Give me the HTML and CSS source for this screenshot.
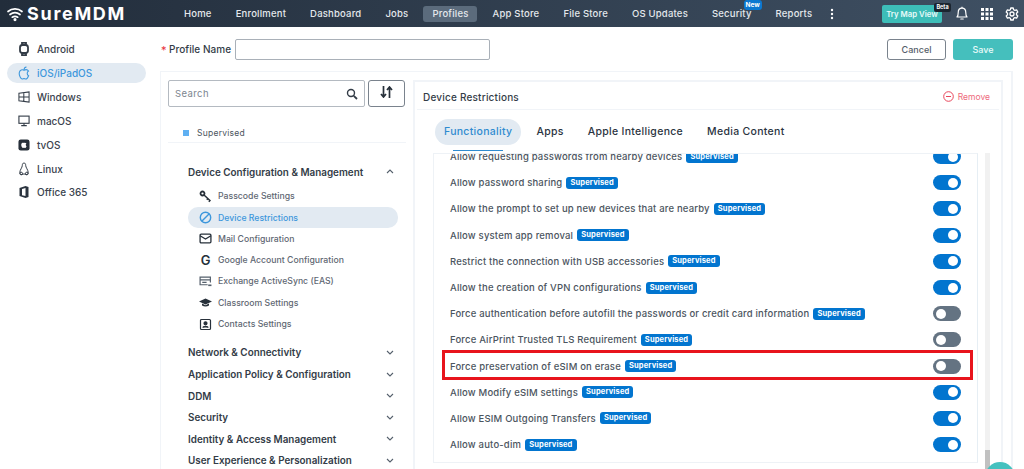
FILE: index.html
```html
<!DOCTYPE html>
<html lang="en">
<head>
    <meta charset="UTF-8">
    <title>SureMDM - Profiles</title>
    <link rel="stylesheet" href="styles.css">
</head>
<body>
    <header class="topbar">
        <div class="logo">
            <svg width="18" height="16" viewBox="0 0 18 16" fill="none" stroke="#fff" stroke-width="1.7" stroke-linecap="round">
                <path d="M2 5.5C6 2 12 2 16 5.5"/>
                <path d="M4 8.5C7 6.2 11 6.2 14 8.5"/>
                <path d="M6.3 11.2C8 10.2 10 10.2 11.7 11.2"/>
                <circle cx="9" cy="13.6" r="0.7" fill="#fff"/>
            </svg>
            <span>SureMDM</span>
        </div>
        <nav class="nav">
            <a>Home</a>
            <a>Enrollment</a>
            <a>Dashboard</a>
            <a>Jobs</a>
            <a class="active">Profiles</a>
            <a>App Store</a>
            <a>File Store</a>
            <a>OS Updates</a>
            <a class="has-badge">Security<span class="new-badge">New</span></a>
            <a>Reports</a>
            <svg class="more" width="4" height="12" viewBox="0 0 4 12" fill="#fff"><circle cx="2" cy="2" r="1.2"/><circle cx="2" cy="6" r="1.2"/><circle cx="2" cy="10" r="1.2"/></svg>
        </nav>
        <div class="top-actions">
            <button class="map-btn">Try Map View<span class="beta-badge">Beta</span></button>
            <svg width="14" height="15" viewBox="0 0 14 15" fill="none" stroke="#fff" stroke-width="1.2"><path d="M2 11c1-1 1.2-2 1.2-4.3C3.2 4 4.8 2.2 7 2.2S10.8 4 10.8 6.7C10.8 9 11 10 12 11z" stroke-linejoin="round"/><path d="M5.8 13h2.4" stroke-linecap="round"/><path d="M7 .8v1.2"/></svg>
            <svg width="12" height="12" viewBox="0 0 12 12" fill="#fff"><rect width="3" height="3"/><rect x="4.5" width="3" height="3"/><rect x="9" width="3" height="3"/><rect y="4.5" width="3" height="3"/><rect x="4.5" y="4.5" width="3" height="3"/><rect x="9" y="4.5" width="3" height="3"/><rect y="9" width="3" height="3"/><rect x="4.5" y="9" width="3" height="3"/><rect x="9" y="9" width="3" height="3"/></svg>
            <svg width="14" height="14" viewBox="0 0 14 14" fill="none" stroke="#fff" stroke-width="1.3"><path d="M5.8 1h2.400l.4 1.700 1.300.7 1.700-.5 1.200 2.100-1.300 1.200v1.600l1.300 1.200-1.200 2.100-1.700-.5-1.300.7L8.200 13H5.800l-.4-1.700-1.300-.7-1.700.5L1.200 9l1.300-1.200V6.200L1.200 5l1.200-2.100 1.700.5 1.300-.7z" stroke-linejoin="round"/><circle cx="7" cy="7" r="2"/></svg>
        </div>
    </header>

    <div class="page">
        <aside class="sidebar">
            <a class="os-item">
                <svg viewBox="0 0 12 14" fill="none" stroke="#333c47" stroke-width="1.8"><rect x="2" y="3" width="8" height="8" rx="2.5"/><path d="M4 3V.8h4V3M4 11v2.2h4V11"/></svg>
                Android
            </a>
            <a class="os-item active">
                <svg viewBox="0 0 12 14" fill="none" stroke="#3d97dc" stroke-width="1.1"><path d="M6 4.200C4.600 3.300 1.500 3.500 1.200 7c-.2 2.800 1.700 6 3 6 .7 0 1.100-.4 1.800-.4s1.100.4 1.800.4c1 0 2.100-1.500 2.800-3.300-1.700-.8-2-3.600-.1-4.700C9.600 3.600 7.400 3.500 6 4.200z"/><path d="M6 4C6 2.500 7 1.200 8.500 1"/></svg>
                iOS/iPadOS
            </a>
            <a class="os-item">
                <svg viewBox="0 0 13 13" fill="none" stroke="#333c47" stroke-width="1.1"><path d="M1 2.500l11-1.500v11l-11-1.500zM6.300 1.800v9.400M1 6.500h11"/></svg>
                Windows
            </a>
            <a class="os-item">
                <svg viewBox="0 0 13 13" fill="none" stroke="#333c47" stroke-width="1.2"><rect x="1" y="1.2" width="11" height="7.8"/><path d="M6.500 9v2.200M3.500 11.500h6"/></svg>
                macOS
            </a>
            <a class="os-item">
                <svg viewBox="0 0 13 13"><rect x="0.5" y="0.5" width="12" height="12" rx="2.5" fill="#27303a"/><path d="M6.500 4.200c-1-.5-3-.3-3 2 0 1.800 1.100 3.600 2 3.600.4 0 .6-.2 1-.2s.6.2 1 .2c.7 0 1.400-1 1.700-2-1-.5-1.100-2.100 0-2.800-.7-1-1.800-1.100-2.700-.8z" fill="#fff"/></svg>
                tvOS
            </a>
            <a class="os-item">
                <svg viewBox="0 0 12 14" fill="none" stroke="#333c47" stroke-width="1"><path d="M6 1C4.700 1 4.300 2.200 4.300 3.500 4.300 5.500 1.800 8 1.800 10.500c0 1 .5 1.700 1.200 2.200l3-.8 3 .8c.7-.5 1.200-1.200 1.200-2.200C10.200 8 7.700 5.500 7.700 3.500 7.700 2.200 7.300 1 6 1z"/><circle cx="3.2" cy="11.5" r="1.3"/><circle cx="8.8" cy="11.5" r="1.3"/></svg>
                Linux
            </a>
            <a class="os-item">
                <svg viewBox="0 0 12 14"><path d="M1.500 3L7.500 1l3 1v10l-3 1-6-2zM7.500 3v8L4 10.300V4z" fill="#2b343f" fill-rule="evenodd"/></svg>
                Office 365
            </a>
        </aside>

        <main class="content">
            <div class="profile-row">
                <span class="star">*</span>
                <label class="profile-label" for="profileName">Profile Name</label>
                <input class="profile-input" id="profileName" type="text">
                <div class="form-buttons">
                    <button class="btn-cancel">Cancel</button>
                    <button class="btn-save">Save</button>
                </div>
            </div>

            <div class="columns">
                <section class="tree">
                    <div class="search-row">
                        <div class="search">
                            <span>Search</span>
                            <svg width="12" height="12" viewBox="0 0 12 12" fill="none" stroke="#333c47" stroke-width="1.4"><circle cx="5" cy="5" r="3.5"/><path d="M7.800 7.800L11 11" stroke-width="1.8"/></svg>
                        </div>
                        <button class="sort-btn">
                            <svg width="13" height="12" viewBox="0 0 13 12" fill="none" stroke="#27303a" stroke-width="1.7"><path d="M3.500 0v10.500M1 8l2.500 3L6 8"/><path d="M9.500 12V1.500M7 4l2.500-3L12 4"/></svg>
                        </button>
                    </div>
                    <div class="legend"><i></i>Supervised</div>
                    <div class="group open">Device Configuration &amp; Management
                        <svg viewBox="0 0 8 5" fill="none" stroke="#55606c" stroke-width="1.1"><path d="M1 4l3-3 3 3"/></svg>
                    </div>
                    <a class="sub-item">
                        <svg viewBox="0 0 13 13" fill="none" stroke="#27303a"><circle cx="3.5" cy="3.5" r="2" stroke-width="1.8"/><path d="M5 5l6.500 6M9 8.500l-1.200 1.200M11 10.500l-1.200 1.200" stroke-width="1.5"/></svg>
                        Passcode Settings
                    </a>
                    <a class="sub-item active">
                        <svg viewBox="0 0 12 12" fill="none" stroke="#3d97dc" stroke-width="1.3"><circle cx="6" cy="6" r="4.8"/><path d="M2.800 9.200l6.400-6.400"/></svg>
                        Device Restrictions
                    </a>
                    <a class="sub-item">
                        <svg viewBox="0 0 12 12" fill="none" stroke="#27303a" stroke-width="1.2"><rect x="1" y="2" width="10" height="8" rx="1"/><path d="M1 3.500l5 3 5-3"/></svg>
                        Mail Configuration
                    </a>
                    <a class="sub-item">
                        <span class="g-icon">G</span>
                        Google Account Configuration
                    </a>
                    <a class="sub-item">
                        <svg viewBox="0 0 12 12" fill="none" stroke="#55606c" stroke-width="1.1"><path d="M8 9H1V2h9.500v5M1 4.500h9.500M3 6.800h4"/><path d="M8.500 9.500h3" stroke-width="1.5"/></svg>
                        Exchange ActiveSync (EAS)
                    </a>
                    <a class="sub-item">
                        <svg viewBox="0 0 13 12"><path d="M6.500 2L13 5 6.500 8 0 5z" fill="#27303a"/><path d="M3 7v2c2 1.300 5 1.300 7 0V7L6.500 8.700z" fill="#27303a"/></svg>
                        Classroom Settings
                    </a>
                    <a class="sub-item">
                        <svg viewBox="0 0 12 13" fill="none" stroke="#27303a" stroke-width="1.2"><rect x="1" y="1.5" width="10" height="10" rx="1"/><circle cx="6" cy="5.3" r="1.5" fill="#27303a"/><path d="M3.200 9.500c.6-1.600 5-1.600 5.600 0" fill="#27303a"/></svg>
                        Contacts Settings
                    </a>
                    <div class="group first-closed">Network &amp; Connectivity<svg viewBox="0 0 8 5" fill="none" stroke="#55606c" stroke-width="1.1"><path d="M1 1l3 3 3-3"/></svg></div>
                    <div class="group">Application Policy &amp; Configuration<svg viewBox="0 0 8 5" fill="none" stroke="#55606c" stroke-width="1.1"><path d="M1 1l3 3 3-3"/></svg></div>
                    <div class="group">DDM<svg viewBox="0 0 8 5" fill="none" stroke="#55606c" stroke-width="1.1"><path d="M1 1l3 3 3-3"/></svg></div>
                    <div class="group">Security<svg viewBox="0 0 8 5" fill="none" stroke="#55606c" stroke-width="1.1"><path d="M1 1l3 3 3-3"/></svg></div>
                    <div class="group">Identity &amp; Access Management<svg viewBox="0 0 8 5" fill="none" stroke="#55606c" stroke-width="1.1"><path d="M1 1l3 3 3-3"/></svg></div>
                    <div class="group">User Experience &amp; Personalization<svg viewBox="0 0 8 5" fill="none" stroke="#55606c" stroke-width="1.1"><path d="M1 1l3 3 3-3"/></svg></div>
                </section>

                <section class="details">
                    <div class="details-head">
                        <h2>Device Restrictions</h2>
                        <a class="remove">
                            <svg width="11" height="11" viewBox="0 0 11 11" fill="none" stroke="#e8475c" stroke-width="1"><circle cx="5.5" cy="5.5" r="4.8"/><path d="M3 5.500h5"/></svg>
                            Remove
                        </a>
                    </div>
                    <div class="tabs">
                        <a class="tab active">Functionality</a>
                        <a class="tab">Apps</a>
                        <a class="tab">Apple Intelligence</a>
                        <a class="tab">Media Content</a>
                    </div>
                    <div class="list-wrap">
                        <div class="list-box">
                            <div class="list">
                                <div class="row"><span>Allow requesting passwords from nearby devices</span><b class="badge">Supervised</b><i class="toggle on"></i></div>
                                <div class="row"><span>Allow password sharing</span><b class="badge">Supervised</b><i class="toggle on"></i></div>
                                <div class="row"><span>Allow the prompt to set up new devices that are nearby</span><b class="badge">Supervised</b><i class="toggle on"></i></div>
                                <div class="row"><span>Allow system app removal</span><b class="badge">Supervised</b><i class="toggle on"></i></div>
                                <div class="row"><span>Restrict the connection with USB accessories</span><b class="badge">Supervised</b><i class="toggle on"></i></div>
                                <div class="row"><span>Allow the creation of VPN configurations</span><b class="badge">Supervised</b><i class="toggle on"></i></div>
                                <div class="row"><span>Force authentication before autofill the passwords or credit card information</span><b class="badge">Supervised</b><i class="toggle"></i></div>
                                <div class="row"><span>Force AirPrint Trusted TLS Requirement</span><b class="badge">Supervised</b><i class="toggle"></i></div>
                                <div class="row marked"><span>Force preservation of eSIM on erase</span><b class="badge">Supervised</b><i class="toggle"></i></div>
                                <div class="row"><span>Allow Modify eSIM settings</span><b class="badge">Supervised</b><i class="toggle on"></i></div>
                                <div class="row"><span>Allow ESIM Outgoing Transfers</span><b class="badge">Supervised</b><i class="toggle on"></i></div>
                                <div class="row"><span>Allow auto-dim</span><b class="badge">Supervised</b><i class="toggle on"></i></div>
                            </div>
                        </div>
                        <div class="scroll-track"><div class="scroll-thumb"></div></div>
                    </div>
                </section>
            </div>
        </main>
    </div>
    <div class="chat-bubble"></div>
</body>
</html>
```

FILE: styles.css
```css
* {
    margin: 0;
    padding: 0;
    box-sizing: border-box;
}

html, body {
    height: 469px;
    overflow: hidden;
}

body {
    font-family: Inter, 'Open Sans', sans-serif;
    background: #fff;
    color: #333c47;
    position: relative;
}

/* top bar */
.topbar {
    height: 27px;
    display: flex;
    align-items: center;
    background: linear-gradient(90deg, #222d3b, #3f5063);
    color: #fff;
}

.logo {
    width: 175px;
    padding-left: 6px;
    display: flex;
    align-items: center;
    gap: 3px;
    font-size: 18px;
    font-weight: 700;
    letter-spacing: 1.7px;
}

.nav {
    display: flex;
    align-items: center;
    gap: 6px;
    flex: 1;
}

.nav a {
    padding: 0 9px;
    height: 16px;
    line-height: 16px;
    font-size: 9.5px;
    font-weight: 500;
    letter-spacing: 0.2px;
    color: #e4e8ec;
    border-radius: 3px;
    white-space: nowrap;
}

.nav a.active {
    background: #5b6b7c;
}

.nav .has-badge {
    position: relative;
}

.new-badge {
    position: absolute;
    top: -6px;
    right: -1px;
    width: 18px;
    height: 10px;
    line-height: 10px;
    text-align: center;
    font-size: 6.5px;
    font-weight: 700;
    letter-spacing: 0;
    background: #0b78d0;
    border-radius: 3px;
    color: #fff;
}

.more {
    margin-left: 3px;
}

.top-actions {
    display: flex;
    align-items: center;
    gap: 12px;
    padding-right: 5px;
}

.map-btn {
    position: relative;
    width: 60px;
    height: 18px;
    margin-right: 1px;
    border: none;
    border-radius: 2px;
    background: #3dbdb8;
    color: #e8fbfa;
    font-family: inherit;
    font-size: 7.8px;
    font-weight: 600;
}

.beta-badge {
    position: absolute;
    top: -2px;
    right: -9px;
    width: 17px;
    height: 9px;
    line-height: 9px;
    font-size: 5.5px;
    font-weight: 700;
    background: #1b2530;
    border-radius: 2px;
    color: #fff;
}

/* page */
.page {
    display: flex;
}

.sidebar {
    width: 160px;
    flex: none;
    padding: 10.5px 14px 0 7px;
}

.os-item {
    height: 23.8px;
    display: flex;
    align-items: center;
    gap: 7px;
    padding-left: 11px;
    font-size: 10px;
    font-weight: 500;
    color: #3a434e;
}

.os-item svg {
    width: 12px;
    height: 14px;
    flex: none;
}

.os-item.active {
    height: 20px;
    margin: 2px 0;
    background: #e2eaf2;
    border-radius: 10px;
    color: #3d97dc;
}

.content {
    flex: 1;
    min-width: 0;
    padding-right: 11px;
}

.profile-row {
    height: 44px;
    padding-top: 12px;
    display: flex;
    align-items: flex-start;
}

.star {
    width: 8px;
    margin-left: 1px;
    line-height: 22px;
    color: #e8303c;
    font-size: 11px;
}

.profile-label {
    width: 66px;
    line-height: 21px;
    font-size: 10px;
    font-weight: 500;
    letter-spacing: 0.05px;
}

.profile-input {
    width: 255px;
    height: 21px;
    border: 1px solid #a9b0b8;
    border-radius: 2px;
}

.form-buttons {
    margin-left: auto;
    display: flex;
    gap: 7px;
}

.btn-cancel, .btn-save {
    width: 60px;
    height: 21px;
    border-radius: 3px;
    font-family: inherit;
    font-size: 9px;
    font-weight: 500;
}

.btn-cancel {
    width: 59px;
    background: #fff;
    border: 1px solid #7a838d;
    color: #555e69;
}

.btn-save {
    background: #45bfbd;
    border: none;
    color: #e8fbfa;
}

.columns {
    display: flex;
    height: 410px;
    border: 1.5px solid #f1f4f8;
    border-bottom: none;
    border-right-width: 2px;
}

/* left tree */
.tree {
    width: 245px;
    flex: none;
    padding: 8px 0 0 7px;
}

.search-row {
    display: flex;
    gap: 3px;
}

.search {
    width: 197px;
    height: 27px;
    display: flex;
    align-items: center;
    justify-content: space-between;
    padding: 0 6px;
    border: 1px solid #b4bac1;
    border-radius: 2px;
    font-size: 9.5px;
    letter-spacing: 0.4px;
    color: #7c858f;
}

.sort-btn {
    width: 37px;
    height: 27px;
    border: 1px solid #7a838d;
    border-radius: 3px;
    background: #fff;
}

.legend {
    height: 36px;
    display: flex;
    align-items: center;
    padding: 17px 0 0 15px;
    margin-bottom: 18px;
    font-size: 8.5px;
    letter-spacing: 0.25px;
    color: #4c5560;
    border-bottom: 1px solid #f1f4f8;
}

.legend i {
    width: 6px;
    height: 6px;
    margin-right: 8px;
    background: #5fb0f2;
}

.group {
    height: 21.6px;
    display: flex;
    align-items: center;
    justify-content: space-between;
    padding: 0 12px 0 20px;
    font-size: 9.9px;
    font-weight: 600;
    color: #333c47;
    white-space: nowrap;
}

.group svg {
    width: 8px;
    height: 5px;
}

.group.open {
    margin-bottom: 3px;
}

.group.first-closed {
    margin-top: 7px;
}

.sub-item {
    height: 21.3px;
    display: flex;
    align-items: center;
    gap: 6px;
    margin: 0 8px 0 20px;
    padding-left: 11px;
    font-size: 8.7px;
    font-weight: 500;
    color: #5f6873;
    white-space: nowrap;
}

.sub-item svg, .g-icon {
    width: 13px;
    height: 13px;
    flex: none;
}

.g-icon {
    line-height: 13px;
    text-align: center;
    font-size: 13px;
    font-weight: 600;
    color: #27303a;
}

.sub-item.active {
    background: #e2eaf2;
    border-radius: 10px;
    color: #3d97dc;
}

/* right panel */
.details {
    flex: 1;
    min-width: 0;
    margin: 8px 8px 0 7px;
    border: 2px solid #f1f4f8;
    border-bottom: none;
    padding: 0 2px;
}

.details-head {
    height: 28px;
    display: flex;
    align-items: center;
    justify-content: space-between;
    padding: 2px 9px 0 6px;
    border-bottom: 1px solid #f1f4f8;
}

.details-head h2 {
    font-size: 10px;
    font-weight: 500;
    letter-spacing: 0.2px;
    color: #333c47;
}

.remove {
    display: flex;
    align-items: center;
    gap: 4px;
    font-size: 8.5px;
    color: #ee6a7c;
}

.tabs {
    display: flex;
    gap: 6px;
    margin: 9px 0 0 18px;
    height: 26px;
}

.tab {
    position: relative;
    padding: 0 9px;
    line-height: 26px;
    font-size: 10.5px;
    font-weight: 500;
    letter-spacing: 0.3px;
    color: #2b343f;
    white-space: nowrap;
}

.tab.active {
    background: #e2eaf2;
    border-radius: 13px;
    color: #2f8bd0;
}

.tab.active::after {
    content: "";
    position: absolute;
    left: 18px;
    bottom: -6px;
    width: 50px;
    height: 1px;
    background: #2f8bd0;
}

.list-wrap {
    display: flex;
    margin: 8px 0 0 16px;
}

.list-box {
    width: 545px;
    height: 310px;
    overflow: hidden;
    border: 1px solid #eef2f6;
    border-right-color: #e6eef4;
}

.list {
    margin-top: -10.5px;
}

.row {
    position: relative;
    height: 26.2px;
    display: flex;
    align-items: center;
    margin: 0 7px 0 12px;
    padding: 0 9px 0 4px;
    font-size: 9.5px;
    letter-spacing: 0.18px;
    font-weight: 500;
    color: #4c5560;
    white-space: nowrap;
}

.row.marked::after {
    content: "";
    position: absolute;
    top: -3.5px;
    bottom: -0.5px;
    left: -4px;
    right: -3px;
    border: 3px solid #e8141c;
}

.badge {
    height: 12px;
    line-height: 12px;
    margin-left: 4px;
    padding: 0 4px;
    font-size: 7.5px;
    font-weight: 700;
    letter-spacing: 0.15px;
    color: #fff;
    background: #0275cf;
    border-radius: 3px;
}

.toggle {
    position: relative;
    width: 28px;
    height: 15px;
    margin-left: auto;
    background: #647382;
    border-radius: 8px;
}

.toggle::after {
    content: "";
    position: absolute;
    top: 2.5px;
    left: 3px;
    width: 10px;
    height: 10px;
    background: #fff;
    border-radius: 50%;
}

.toggle.on {
    background: #0275cf;
}

.toggle.on::after {
    left: 15px;
}

.scroll-track {
    width: 5px;
    height: 316px;
    margin-left: 7px;
    position: relative;
    background: #f1f1f1;
}

.scroll-thumb {
    position: absolute;
    top: 297px;
    left: 0;
    width: 5px;
    height: 20px;
    background: #c1c1c1;
}

.chat-bubble {
    position: absolute;
    left: 985px;
    top: 462px;
    width: 30px;
    height: 30px;
    background: #45c1bf;
    border-radius: 50%;
}
```
